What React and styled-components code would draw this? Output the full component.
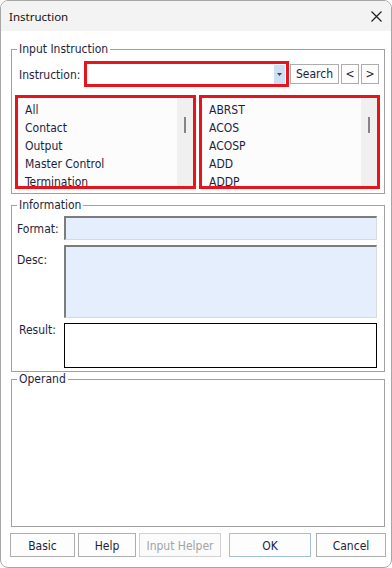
import React from "react";
import styled, { createGlobalStyle, css } from "styled-components";

const GlobalStyle = createGlobalStyle`
  html, body {
    margin: 0;
    padding: 0;
    background: #ffffff;
  }
  body {
    font-family: "DejaVu Sans Condensed", "DejaVu Sans", sans-serif;
    font-stretch: condensed;
    font-size: 12px;
    color: #1e1e3e;
  }
  *, *::before, *::after {
    box-sizing: border-box;
  }
`;

const Window = styled.div`
  width: 392px;
  height: 568px;
  border: 1px solid #a6a6a6;
  border-radius: 8px;
  overflow: hidden;
  display: flex;
  flex-direction: column;
  background: #ffffff;
`;

const TitleBar = styled.div`
  flex: none;
  height: 30px;
  background: #f3f3f3;
  display: flex;
  align-items: center;
  justify-content: space-between;
  padding: 0 9px 0 8px;
`;

const Title = styled.span`
  font-family: "Noto Sans", "Open Sans", sans-serif;
  font-stretch: normal;
  font-size: 11.5px;
  color: #111111;
`;

const CloseButton = styled.button`
  border: 0;
  background: transparent;
  padding: 0;
  width: 11px;
  height: 11px;
  display: flex;
  cursor: pointer;
`;

const Content = styled.div`
  flex: 1;
  display: flex;
  flex-direction: column;
  padding: 11px 6px 10px 10px;
  min-height: 0;
`;

const Group = styled.fieldset`
  margin: ${(p) => p.$top || 0}px 0 0 0;
  padding: 0;
  border: 1px solid #a0a0a0;
  min-width: 0;
  ${(p) =>
    p.$grow &&
    css`
      flex: 1;
    `}
`;

const Legend = styled.legend`
  margin-left: 5px;
  padding: 0 2px;
  font-size: 12px;
  line-height: 14px;
`;

const InstrBody = styled.div`
  display: flex;
  flex-direction: column;
  gap: 8px;
  padding: 5px 4px 4px 3px;
`;

const InstrRow = styled.div`
  display: flex;
  align-items: center;
  height: 26px;
  padding-left: 4px;
`;

const RowLabel = styled.span`
  width: 65px;
  flex: none;
  white-space: nowrap;
  padding-top: 2px;
`;

const Combo = styled.div`
  width: 205px;
  height: 26px;
  flex: none;
  border: 3px solid #e8141c;
  background: #ffffff;
  display: flex;
  justify-content: flex-end;
  padding: 1px 1px 0 0;
`;

const ComboArrow = styled.div`
  width: 11px;
  background: #cddff3;
  display: flex;
  align-items: center;
  justify-content: center;
`;

const SmallButton = styled.button`
  flex: none;
  width: ${(p) => p.$w}px;
  height: 20px;
  margin-left: ${(p) => p.$ml || 0}px;
  padding: 1px 0 0 0;
  border: 1px solid #adadad;
  background: #fdfdfd;
  font: inherit;
  color: inherit;
  line-height: 17px;
`;

const ListsRow = styled.div`
  display: grid;
  grid-template-columns: 181px 181px;
  column-gap: 3px;
  height: 94px;
`;

const ListBox = styled.div`
  border: 3px solid #e8141c;
  background: #fcfcfc;
  display: flex;
  overflow: hidden;
`;

const Items = styled.div`
  flex: 1;
  padding: 3px 0 0 7px;
  line-height: 18px;
  overflow: hidden;
  white-space: nowrap;
`;

const Scrollbar = styled.div`
  flex: none;
  width: 16px;
  background: #f0f0f0;
  padding: 19px 0 0 7px;
`;

const Thumb = styled.div`
  width: 2px;
  height: 16px;
  background: #858585;
`;

const InfoBody = styled.div`
  display: grid;
  grid-template-columns: 47px 1fr;
  row-gap: 5px;
  padding: 4px 7px 3px 5px;
`;

const FieldLabel = styled.span`
  align-self: ${(p) => p.$align || "center"};
  padding-top: ${(p) => p.$pt || 0}px;
  margin-left: ${(p) => p.$ml || 0}px;
  line-height: 14px;
  white-space: nowrap;
`;

const SunkenField = styled.div`
  height: ${(p) => p.$h}px;
  background: #e5eefd;
  border-top: 2px solid #7c7c7c;
  border-left: 2px solid #7c7c7c;
  border-right: 1px solid #dadada;
  border-bottom: 1px solid #dadada;
`;

const ResultBox = styled.div`
  height: 45px;
  background: #ffffff;
  border: 1px solid #000000;
`;

const ButtonRow = styled.div`
  display: flex;
  height: 24px;
  margin: 6px -1px 0 -1px;
  flex: none;
`;

const DialogButton = styled.button`
  flex: none;
  width: ${(p) => p.$w}px;
  height: 24px;
  margin-left: ${(p) => p.$ml || 0}px;
  padding: 2px 0 0 0;
  font: inherit;
  color: inherit;
  background: #fdfdfd;
  border: 1px solid #adadad;
  ${(p) =>
    p.$variant === "default" &&
    css`
      border-color: #a3bfe3;
    `}
  ${(p) =>
    p.$variant === "disabled" &&
    css`
      border-color: #d2d2d2;
      color: #a3a3a3;
      background: #fbfbfb;
    `}
`;

const categories = ["All", "Contact", "Output", "Master Control", "Termination"];

const instructions = ["ABRST", "ACOS", "ACOSP", "ADD", "ADDP"];

export default function App() {
  return (
    <>
      <GlobalStyle />
      <Window>
        <TitleBar>
          <Title>Instruction</Title>
          <CloseButton aria-label="Close">
            <svg width="11" height="11" viewBox="0 0 11 11">
              <path d="M0.5 0.5 L10.5 10.5 M10.5 0.5 L0.5 10.5" stroke="#1a1a1a" strokeWidth="1.1" fill="none" />
            </svg>
          </CloseButton>
        </TitleBar>
        <Content>
          <Group>
            <Legend>Input Instruction</Legend>
            <InstrBody>
              <InstrRow>
                <RowLabel>Instruction:</RowLabel>
                <Combo>
                  <ComboArrow>
                    <svg width="5" height="3" viewBox="0 0 5 3">
                      <path d="M0 0 H5 L2.5 3 Z" fill="#444" />
                    </svg>
                  </ComboArrow>
                </Combo>
                <SmallButton $w={49} $ml={1}>Search</SmallButton>
                <SmallButton $w={18} $ml={2}>&lt;</SmallButton>
                <SmallButton $w={18} $ml={2}>&gt;</SmallButton>
              </InstrRow>
              <ListsRow>
                <ListBox>
                  <Items>
                    {categories.map((c) => (
                      <div key={c}>{c}</div>
                    ))}
                  </Items>
                  <Scrollbar>
                    <Thumb />
                  </Scrollbar>
                </ListBox>
                <ListBox>
                  <Items>
                    {instructions.map((c) => (
                      <div key={c}>{c}</div>
                    ))}
                  </Items>
                  <Scrollbar>
                    <Thumb />
                  </Scrollbar>
                </ListBox>
              </ListsRow>
            </InstrBody>
          </Group>

          <Group $top={4}>
            <Legend>Information</Legend>
            <InfoBody>
              <FieldLabel $pt={2}>Format:</FieldLabel>
              <SunkenField $h={24} />
              <FieldLabel $align="start" $pt={8}>Desc:</FieldLabel>
              <SunkenField $h={73} />
              <FieldLabel $align="start" $ml={2}>Result:</FieldLabel>
              <ResultBox />
            </InfoBody>
          </Group>

          <Group $grow>
            <Legend>Operand</Legend>
          </Group>

          <ButtonRow>
            <DialogButton $w={65}>Basic</DialogButton>
            <DialogButton $w={58} $ml={3}>Help</DialogButton>
            <DialogButton $w={82} $ml={3} $variant="disabled">Input Helper</DialogButton>
            <DialogButton $w={82} $ml={8} $variant="default">OK</DialogButton>
            <DialogButton $w={70} $ml={5}>Cancel</DialogButton>
          </ButtonRow>
        </Content>
      </Window>
    </>
  );
}
